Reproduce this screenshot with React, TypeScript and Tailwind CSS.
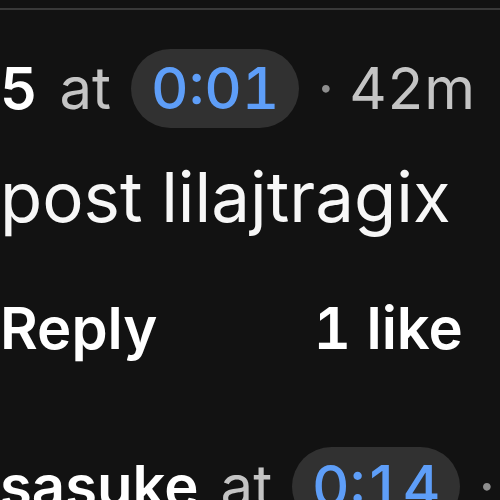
function TimeChip({ time }: { time: string }) {
  return (
    <span className="inline-flex h-[79px] items-center rounded-full bg-[#313131] px-[20px] font-medium text-[#5e9ef8] leading-[79px]">
      {time}
    </span>
  );
}

function CommentHeader({ user, time, ago }: { user: string; time: string; ago?: string }) {
  return (
    <div className="flex h-[79px] items-center whitespace-nowrap text-[58px] leading-[79px]">
      <span className="font-semibold text-white">{user}</span>
      <span className="ml-[22px] text-[#c4c4c4]">at</span>
      <span className="ml-[20px]">
        <TimeChip time={time} />
      </span>
      <span className="ml-[18px] text-[#8e8e8e]">·</span>
      {ago && <span className="ml-[15px] text-[#c4c4c4]">{ago}</span>}
    </div>
  );
}

export default function App() {
  return (
    <div className="h-[500px] w-[500px] overflow-hidden bg-[#121212] font-['Inter',sans-serif] tabular-nums antialiased">
      <div className="h-[8px]" />
      <div className="h-[2px] bg-[#393939]" />

      <div className="mt-[39px]">
        <CommentHeader user="5" time="0:01" ago="42m" />
        <p className="mt-[28px] whitespace-nowrap text-[69px] leading-[82px] text-[#f7f7f7]">post lilajtragix</p>
        <div className="mt-[55px] flex whitespace-nowrap text-[58px] font-semibold leading-[70px] text-white">
          <button className="font-semibold">Reply</button>
          <span className="ml-[156px]">1 like</span>
        </div>
      </div>

      <div className="mt-[84px]">
        <CommentHeader user="sasuke" time="0:14" />
      </div>
    </div>
  );
}
